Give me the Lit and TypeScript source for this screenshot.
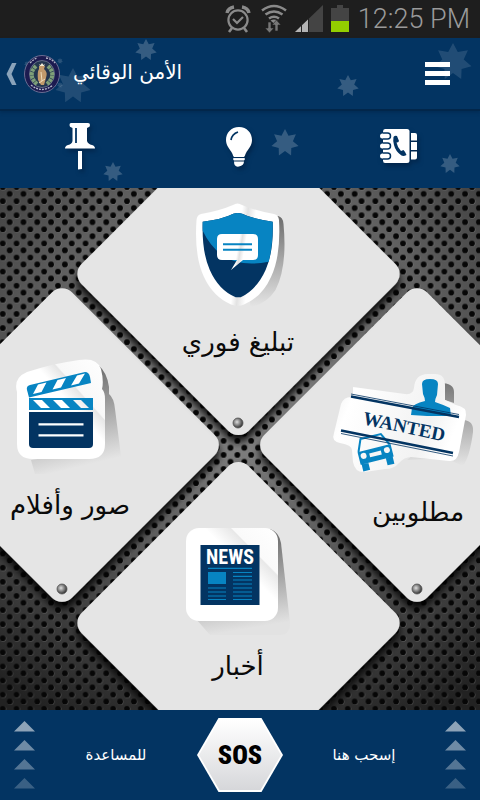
import { LitElement, html, css, svg } from "lit";
import { customElement } from "lit/decorators.js";

const star = (cx: number, cy: number, r: number, opacity: number) => {
  const pts: string[] = [];
  for (let i = 0; i < 14; i++) {
    const a = (Math.PI * i) / 7 - Math.PI / 2;
    const d = i % 2 ? r * 0.58 : r;
    pts.push(`${(cx + d * Math.cos(a)).toFixed(1)},${(cy + d * Math.sin(a)).toFixed(1)}`);
  }
  return svg`<polygon points=${pts.join(" ")} fill="#fff" opacity=${opacity} />`;
};

const stars = html`<svg class="stars" viewBox="0 38 480 150" preserveAspectRatio="xMidYMid slice" aria-hidden="true">
  ${star(146, 50, 11, 0.2)} ${star(73, 86, 18, 0.12)} ${star(348, 86, 11, 0.2)}
  ${star(453, 62, 19, 0.12)} ${star(113, 172, 10, 0.2)} ${star(285, 143, 14, 0.2)}
  ${star(450, 164, 10, 0.2)} ${star(27, 64, 3, 0.15)} ${star(60, 61, 3, 0.15)} ${star(60, 85, 3, 0.15)}
</svg>`;

const statusIcons = html`<svg width="114" height="38" viewBox="224 0 114 38" aria-hidden="true">
  <g fill="none" stroke="#8a8a8a" stroke-width="2.2">
    <circle cx="239" cy="20" r="9.6" />
    <path d="M234 19l4 4 6-6" />
    <path d="M233 28l-3 4M245 28l3 4" stroke-width="2.6" />
    <path d="M228 13q1-5 7-6M250 13q-1-5-7-6" stroke-width="3.4" />
  </g>
  <g fill="none" stroke="#8a8a8a" stroke-width="2.6">
    <path d="M263 10.500q12-9 24 0" /><path d="M266.500 14.500q8.500-6 17 0" />
    <path d="M270 18.500q5-3.500 10 0" />
  </g>
  <path d="M271.500 20.500q3.500-2 7 0l-3.500 3z" fill="#8a8a8a" />
  <path d="M269 22h3v6h3l-4.500 5-4.500-5h3zM276 31v-6h-3l4.500-5 4.500 5h-3v6z" fill="#777" stroke="#1e1e1e" stroke-width="0.6" />
  <path d="M324 5v27h-28z" fill="#444" />
  <path d="M296 32l13.500-13v13z" fill="#b4b4b4" />
  <path d="M302.500 22v10M309.500 18v14" stroke="#222" stroke-width="1" />
</svg>`;

const battery = html`<svg width="18" height="38" viewBox="331 0 18 38" aria-hidden="true">
  <path d="M337 5h6v3h6v24h-18v-24h6z" fill="#444" /><path d="M331 21h18v11h-18z" fill="#94cf00" />
</svg>`;

const emblem = html`<svg width="38" height="40" viewBox="0 0 38 40" aria-hidden="true">
  <ellipse cx="19" cy="20" rx="17.500" ry="18.500" fill="#1c1b50" stroke="#6a6c92" />
  <ellipse cx="19" cy="20" rx="12.500" ry="13.500" fill="#24364f" stroke="#9298ac" stroke-width="0.6" />
  <path d="M7 9q4-4 7-5M23 4q6 1 9 5M8 31q11 9 22 0" fill="none" stroke="#b4b7c8" stroke-width="1.300" stroke-dasharray="2 1" />
  <path d="M13 12q-9 9 1 18M25 12q9 9-1 18" fill="none" stroke="#7e9f78" stroke-width="4" stroke-dasharray="3 0.600" />
  <path d="M16 12h6l-1 3q4 3 2 9l-2 7h-3l-3-5q-1-8 1-11z" fill="#c29a6b" />
  <path d="M16 10l1 2h4l1-2-1.500 1-1.500-2-1.500 2z" fill="#f1ead2" />
  <path d="M18 18l1 9M16 29l6-4" stroke="#f0ddba" stroke-width="1" />
</svg>`;

const pin = html`<svg width="34" height="50" viewBox="62 122 34 50" aria-hidden="true">
  <path fill="#fff" d="M70 123h17q2 0 2 2t-2 2.500l-1 .5v13q1 3 5 4 3 1 3 3.500h-30q0-2.500 3-3.500 4-1 4.500-4v-13l-1-.5q-2-.5-2-2.500t1.500-2zM77 151h4v18l-4 .5z" />
  <path d="M75 128v15" stroke="#033462" stroke-width="1.800" />
</svg>`;

const bulb = html`<svg width="30" height="50" viewBox="225 122 30 50" aria-hidden="true">
  <path fill="#fff" d="M239 127c8 0 13 6 13 13 0 6-4 9-6 13-1 2-1 3-2 4h-10c-1-1-1-2-2-4-2-4-6-7-6-13 0-7 5-13 13-13z" />
  <path fill="#fff" d="M233.500 158h11q1 1.500-.5 2.500h-10q-1.500-1-.5-2.500zM234 161.500h10q0 4-5 5t-5-5z" />
  <path d="M231 140q1-6 7-8" stroke="#033462" stroke-width="1.800" fill="none" />
  <path d="M233 157.600h12" stroke="#033462" stroke-width="0.7" />
</svg>`;

const phonebook = html`<svg width="40" height="50" viewBox="380 122 40 50" aria-hidden="true">
  <path fill="#fff" d="M385 129h22q2.500 0 2.500 2.500v29q0 2.500-2.500 2.500h-22q-2 0-2-2.500v-29q0-2.500 2-2.500z" />
  <path fill="#fff" d="M411 133h4q2 0 2 2v5.500h-6zM411 142h6v8h-6zM411 151.500h6v6q0 2-2 2h-4z" />
  ${[136, 146, 156].map(
    (y) => svg`<rect x="380" y=${y - 2.5} width="9" height="5" rx="2.500" fill="#fff" /><path d=${`M383 ${y - 3}h4.500a3 3 0 0 1 0 6h-4.500`} fill="none" stroke="#033462" stroke-width="1.500" />`,
  )}
  <path fill="#033462" d="M393.500 137q1.500-2 3.500-1l2 5q-.5 1.500-2.500 1.500 1 5 4.500 8.500l2.500-1q2 2 3 5-3 1.500-5 .5-6-4-7.500-10.500-1.200-5-.5-8z" />
</svg>`;

const perforation = html`<svg class="backdrop" viewBox="0 188 480 522" preserveAspectRatio="none" aria-hidden="true">
  <defs>
    <radialGradient id="metal" gradientUnits="userSpaceOnUse" cx="240" cy="360" r="400">
      <stop offset="0" stop-color="#969696" /><stop offset="0.5" stop-color="#5e5e5e" />
      <stop offset="0.8" stop-color="#3b3b3b" /><stop offset="1" stop-color="#222" />
    </radialGradient>
    <pattern id="holes" x="2.800" y="187" width="13.800" height="14.100" patternUnits="userSpaceOnUse">
      <g fill="#aaa" opacity="0.35"><circle cx="7.300" cy="7.400" r="3" /><circle cx="0.400" cy="0.400" r="3" /><circle cx="14.200" cy="0.400" r="3" /><circle cx="0.400" cy="14.500" r="3" /><circle cx="14.200" cy="14.500" r="3" /></g>
      <g fill="#060606"><circle cx="6.900" cy="7" r="2.900" /><circle cx="0" cy="0" r="2.900" /><circle cx="13.800" cy="0" r="2.900" /><circle cx="0" cy="14.100" r="2.900" /><circle cx="13.800" cy="14.100" r="2.900" /></g>
    </pattern>
    <filter id="drop" x="-20%" y="-20%" width="140%" height="140%">
      <feDropShadow dx="0" dy="7" stdDeviation="4" flood-color="#000" flood-opacity="0.95" />
    </filter>
    <radialGradient id="rivet" cx="0.4" cy="0.4" r="0.6">
      <stop offset="0" stop-color="#ddd" /><stop offset="0.6" stop-color="#777" /><stop offset="1" stop-color="#333" />
    </radialGradient>
  </defs>
  <path d="M0 188h480v522H0z" fill="url(#metal)" />
  <path d="M0 188h480v522H0z" fill="url(#holes)" />
  ${[
    [62, 445, 115],
    [417, 445, 115],
    [238.5, 623, 118],
    [238.5, 274, 118],
  ].map(
    ([x, y, h]) => svg`<g filter="url(#drop)"><rect x=${x - h} y=${y - h} width=${h * 2} height=${h * 2} rx="14" fill="#e5e5e5" transform=${`rotate(45 ${x} ${y})`} /></g>`,
  )}
  ${[
    [238, 423],
    [62, 589],
    [417, 589],
  ].map(([x, y]) => svg`<circle cx=${x} cy=${y} r="5" fill="url(#rivet)" stroke="#555" stroke-width="0.8" />`)}
</svg>`;

const shield = html`<svg width="100" height="108" viewBox="188 202 100 108" aria-hidden="true">
  <defs>
    <linearGradient id="shade1" x1="0" y1="0" x2="0" y2="1"><stop offset="0" stop-color="#666" /><stop offset="1" stop-color="#e5e5e5" /></linearGradient>
    <linearGradient id="curl1" x1="0" y1="0" x2="1" y2="0.15"><stop offset="0" stop-color="#fff" /><stop offset="0.55" stop-color="#fff" /><stop offset="0.62" stop-color="#e2e2e2" /><stop offset="0.72" stop-color="#fff" /></linearGradient>
  </defs>
  <path d="M240 212q20 6 38 4 5 1 5.500 8 4 43-8 66-9 14-25 17z" fill="url(#shade1)" />
  <path d="M233 205q4.500-3 9 0 14 6 32 9 4.500 1 5 6 2 36-8 57-9 20-27 27.500-6 2.500-13 0-18-8-27-27.500-10-21-7.500-57 .5-5 4.500-6 18-3 32-9z" fill="url(#curl1)" />
  <path d="M202.700 221.700q20-2.500 30.500-8 4.500-1.500 9 0 11 5.500 30.500 8 1 30-7 48-9 20-25 27.500h-5q-17-7-26-27.500-8-18-7-48z" fill="#033462" />
  <path d="M202.700 221.700q20-2.500 30.500-8 4.500-1.500 9 0 11 5.500 30.500 8 .5 22-4 40-29 6-47-7-12-9-19-24z" fill="#0784c2" />
  <path d="M222 234h31q5 0 5 5v16q0 5-5 5h-10l-12 10 6-10h-15q-5 0-5-5v-16q0-5 5-5z" fill="url(#curl1)" />
  <path d="M223 244.300h29M223 249.700h29" stroke="#0784c2" stroke-width="2" />
</svg>`;

const clapper = html`<svg width="112" height="120" viewBox="15 356 112 120" aria-hidden="true">
  <defs>
    <linearGradient id="shade2" x1="0" y1="0" x2="0.2" y2="1"><stop offset="0" stop-color="#555" /><stop offset="0.35" stop-color="#888" /><stop offset="1" stop-color="#e5e5e5" /></linearGradient>
    <linearGradient id="curl2" x1="0" y1="1" x2="1" y2="0"><stop offset="0" stop-color="#fff" /><stop offset="0.58" stop-color="#fff" /><stop offset="0.69" stop-color="#e6e6e6" /><stop offset="0.7" stop-color="#f8f8f8" /><stop offset="1" stop-color="#fff" /></linearGradient>
  </defs>
  <path d="M99 364q9 7 11 22v7q5 4 6 15l7 55q-1 10-12 10h-75l-4-14 66-10z" fill="url(#shade2)" />
  <path d="M28 371q28-9 52-12 18-3 22 9 3 12 1 20 3 3 3 10v45q0 15-16 15H34q-16 0-16-15v-52q-4-14 10-20z" fill="url(#curl2)" />
  <path d="M28 389q-1-4 3-5l55-13q4 0 5 5l1 6-62 14.500z" fill="#0784c2" />
  <path d="M39 383.500l8.500-2-5 9.500-8.500 2zM58.500 379l8.500-2-5 9.500-8.500 2zM78 374.500l8-2-6 10-8 2z" fill="#fff" />
  <path d="M30 397h64v12H30zM34 399l8 8h9l-8-8zM54 399l8 8h9l-8-8zM74 399l8 8h8l-8-8z" fill="#0784c2" fill-rule="evenodd" />
  <path d="M30 411h64v32q0 4-4 4H34q-4 0-4-4z" fill="#033462" />
  <path d="M39.500 423.300h45M39.500 434.300h45" stroke="#fff" stroke-width="2.200" />
</svg>`;

const wanted = html`<svg width="180" height="108" viewBox="328 370 180 108" aria-hidden="true">
  <defs>
    <linearGradient id="shade3" x1="0" y1="0" x2="0" y2="1"><stop offset="0" stop-color="#777" /><stop offset="1" stop-color="#e5e5e5" /></linearGradient>
    <linearGradient id="curl3" x1="0" y1="0" x2="1" y2="0.3"><stop offset="0" stop-color="#eee" /><stop offset="0.2" stop-color="#fff" /><stop offset="0.8" stop-color="#f2f2f2" /><stop offset="1" stop-color="#fff" /></linearGradient>
  </defs>
  <path d="M440 383q14 0 14 9v11l-12-4zM464 420q10 1 9 12-3 24-10 34l-18-8-38 2 12-10 40 2z" fill="url(#shade3)" />
  <path d="M353 387l52 7q8 1 9-6 1-14 14-14h7q10 0 10 11v15l11 5q11 2 10 10l-7 37q-2 10-10 9l-38-4q-7 0-12 6t-14 6l-20 3q-10 1-12-10l-1-12q0-5-12-7-9-2-6-10l7-29q3-8 12-7z" fill="url(#curl3)" />
  <path d="M422 384q0-5 8-5t8 5l-1 11q-2 4-2 7 9 3 15 6l1 8-24 0-16-1 1-7q1-4 13-7 0-3-2-7z" fill="#0784c2" />
  <g transform="rotate(-14 375 452)">
    <path d="M359 448l5-12h21l6 12" fill="none" stroke="#0784c2" stroke-width="2" />
    <path d="M358 448h34v13h-34zM359 461h7v7h-7zM384 461h7v7h-7z" fill="#0784c2" />
    <circle cx="363" cy="453" r="3" fill="#f6f6f6" /><circle cx="387" cy="453" r="3" fill="#f6f6f6" />
    <path d="M369 452h12v4h-12z" fill="#f6f6f6" />
  </g>
  <g stroke="#033462">
    <path d="M351 396.500l108 20.500M341 430.500l112 22.500" stroke-width="2.600" />
    <path d="M351 394l108 20.500M341 433.500l112 22.500" stroke-width="0.8" />
  </g>
  <text x="362" y="424" transform="rotate(12 362 424)" class="wanted">WANTED</text>
</svg>`;

const news = html`<svg width="108" height="112" viewBox="184 524 108 112" aria-hidden="true">
  <defs>
    <linearGradient id="shade4" x1="0" y1="0" x2="0.15" y2="1"><stop offset="0" stop-color="#555" /><stop offset="1" stop-color="#e2e2e2" /></linearGradient>
    <linearGradient id="curl4" x1="0" y1="1" x2="1" y2="0"><stop offset="0" stop-color="#fff" /><stop offset="0.6" stop-color="#fff" /><stop offset="0.74" stop-color="#e8e8e8" /><stop offset="0.75" stop-color="#fafafa" /><stop offset="1" stop-color="#fff" /></linearGradient>
  </defs>
  <path d="M270 527q9 3 11 14l9 80q0 12-10 12h-70l-14-16z" fill="url(#shade4)" />
  <rect x="186" y="526" width="92" height="93" rx="13" fill="url(#curl4)" />
  <path d="M200.500 543h59v60h-59z" fill="#033462" />
  <text x="230" y="562" text-anchor="middle" class="news">NEWS</text>
  <path d="M208 570h18v12h-18z" fill="#0784c2" />
  <path d="M208 566.300h44M233 570.500h19M233 574.300h19M233 578h19M233 582h19M233 586h19M233 590h19M233 594h19M233 597.500h19M208 586h18M208 590h18M208 594h18M208 597.500h18" stroke="#0784c2" stroke-width="1.200" />
</svg>`;

const arrows = html`<svg class="arrows" width="21" height="76" viewBox="14 718 21 76" aria-hidden="true">
  ${[
    [722, 0.55],
    [741, 0.43],
    [760, 0.32],
    [779, 0.22],
  ].map(([y, o]) => svg`<path d=${`M24.500 ${y}l10.500 10.500H14z`} fill="#fff" opacity=${o} />`)}
</svg>`;

const tiles = [
  { area: "top", label: "تبليغ فوري", icon: shield },
  { area: "left", label: "صور وأفلام", icon: clapper },
  { area: "right", label: "مطلوبين", icon: wanted },
  { area: "bottom", label: "أخبار", icon: news },
];

const tools = [
  { name: "تثبيت", icon: pin },
  { name: "نصائح", icon: bulb },
  { name: "دليل الهاتف", icon: phonebook },
];

@customElement("app-root")
export class AppRoot extends LitElement {
  static styles = css`
    :host {
      display: flex;
      flex-direction: column;
      min-height: 100vh;
      background: #033462;
      color: #fff;
      font-family: "DejaVu Sans", sans-serif;
    }
    * {
      box-sizing: border-box;
    }
    svg {
      display: block;
      flex: none;
    }
    button {
      border: 0;
      padding: 0;
      background: none;
      color: inherit;
      font: inherit;
      cursor: pointer;
    }
    .status {
      display: flex;
      justify-content: flex-end;
      align-items: center;
      height: 38px;
      padding-right: 10px;
      background: #1e1e1e;
      color: #9a9a9a;
      font-family: Roboto, sans-serif;
      font-size: 27px;
      font-weight: 300;
    }
    .status svg + svg {
      margin-left: -6px;
    }
    .status time {
      margin-left: 9px;
    }
    .top {
      position: relative;
    }
    .stars {
      position: absolute;
      inset: 0;
      width: 100%;
      height: 100%;
    }
    .bar {
      position: relative;
      display: flex;
      align-items: center;
      height: 73px;
      padding: 0 30px 0 6px;
      border-bottom: 2px solid #02264a;
      box-shadow: 0 2px 3px #02264a80;
    }
    .back {
      display: flex;
      align-items: center;
      gap: 6px;
    }
    h1 {
      margin: 0 auto 0 12px;
      padding-bottom: 4px;
      font-size: 20px;
      line-height: 24px;
      font-weight: 400;
    }
    .tools {
      position: relative;
      display: grid;
      grid-template-columns: repeat(3, 1fr);
      height: 77px;
      padding-bottom: 5px;
    }
    .tools button {
      display: grid;
      place-items: center;
      filter: drop-shadow(2px 3px 2px #00193688);
    }
    .board {
      position: relative;
      flex: none;
      display: grid;
      grid-template: "left top right" 1fr "left bottom right" 1fr / minmax(0, 7fr) minmax(0, 10fr) minmax(0, 7fr);
      aspect-ratio: 480 / 522;
      overflow: hidden;
    }
    .backdrop {
      position: absolute;
      inset: 0;
      width: 100%;
      height: 100%;
    }
    .tile {
      position: relative;
      display: flex;
      flex-direction: column;
      align-items: center;
      justify-content: center;
      gap: 8px;
      color: #0a0a0a;
      font-size: 26px;
      line-height: 40px;
      white-space: nowrap;
    }
    .top-tile {
      grid-area: top;
      justify-content: flex-start;
      gap: 12px;
      padding: 14px 4px 0 0;
    }
    .left-tile {
      grid-area: left;
      padding-bottom: 16px;
    }
    .right-tile {
      grid-area: right;
      gap: 14px;
      padding: 4px 0 0 16px;
    }
    .bottom-tile {
      grid-area: bottom;
      justify-content: flex-end;
      padding: 0 4px 24px 0;
    }
    .wanted {
      font: bold 19px "Liberation Serif", serif;
      fill: #033462;
    }
    .news {
      font: bold 20px "Roboto Condensed", Roboto, sans-serif;
      fill: #fff;
    }
    .sos-bar {
      display: flex;
      align-items: center;
      height: 90px;
      padding: 0 14px;
      font-size: 15px;
      line-height: 20px;
    }
    .sos-bar span {
      flex: 1;
      text-align: center;
    }
    .sos {
      width: 86px;
      height: 74px;
      padding: 2px;
      background: #fff;
      clip-path: polygon(25% 0, 75% 0, 100% 50%, 75% 100%, 25% 100%, 0 50%);
    }
    .sos b {
      display: grid;
      place-items: center;
      height: 100%;
      background: linear-gradient(#fff, #d6d7da);
      clip-path: polygon(25% 0, 75% 0, 100% 50%, 75% 100%, 25% 100%, 0 50%);
      color: #000;
      font-family: "Roboto Condensed", Roboto, sans-serif;
      font-size: 26px;
      font-weight: 900;
    }
  `;

  render() {
    return html`
      <div class="status">${statusIcons}${battery}<time>12:25 PM</time></div>
      <div class="top">
        ${stars}
        <header class="bar">
          <button class="back" aria-label="رجوع">
            <svg width="11" height="24" viewBox="0 0 11 24"><path d="M6 1h4.500L5.500 12l5 11H6L0.500 12z" fill="#8ba3ba" /></svg>
            ${emblem}
          </button>
          <h1 dir="rtl">الأمن الوقائي</h1>
          <button aria-label="القائمة">
            <svg width="25" height="23" viewBox="0 0 25 23"><path d="M0 0h25v5H0zM0 9h25v5H0zM0 18h25v5H0z" fill="#fff" /></svg>
          </button>
        </header>
        <nav class="tools">${tools.map((t) => html`<button aria-label=${t.name}>${t.icon}</button>`)}</nav>
      </div>
      <main class="board">
        ${perforation}
        ${tiles.map((t) => html`<button class="tile ${t.area}-tile">${t.icon}<span dir="rtl">${t.label}</span></button>`)}
      </main>
      <footer class="sos-bar">
        ${arrows}
        <span dir="rtl">للمساعدة</span>
        <button class="sos"><b>SOS</b></button>
        <span dir="rtl">إسحب هنا</span>
        ${arrows}
      </footer>
    `;
  }
}
